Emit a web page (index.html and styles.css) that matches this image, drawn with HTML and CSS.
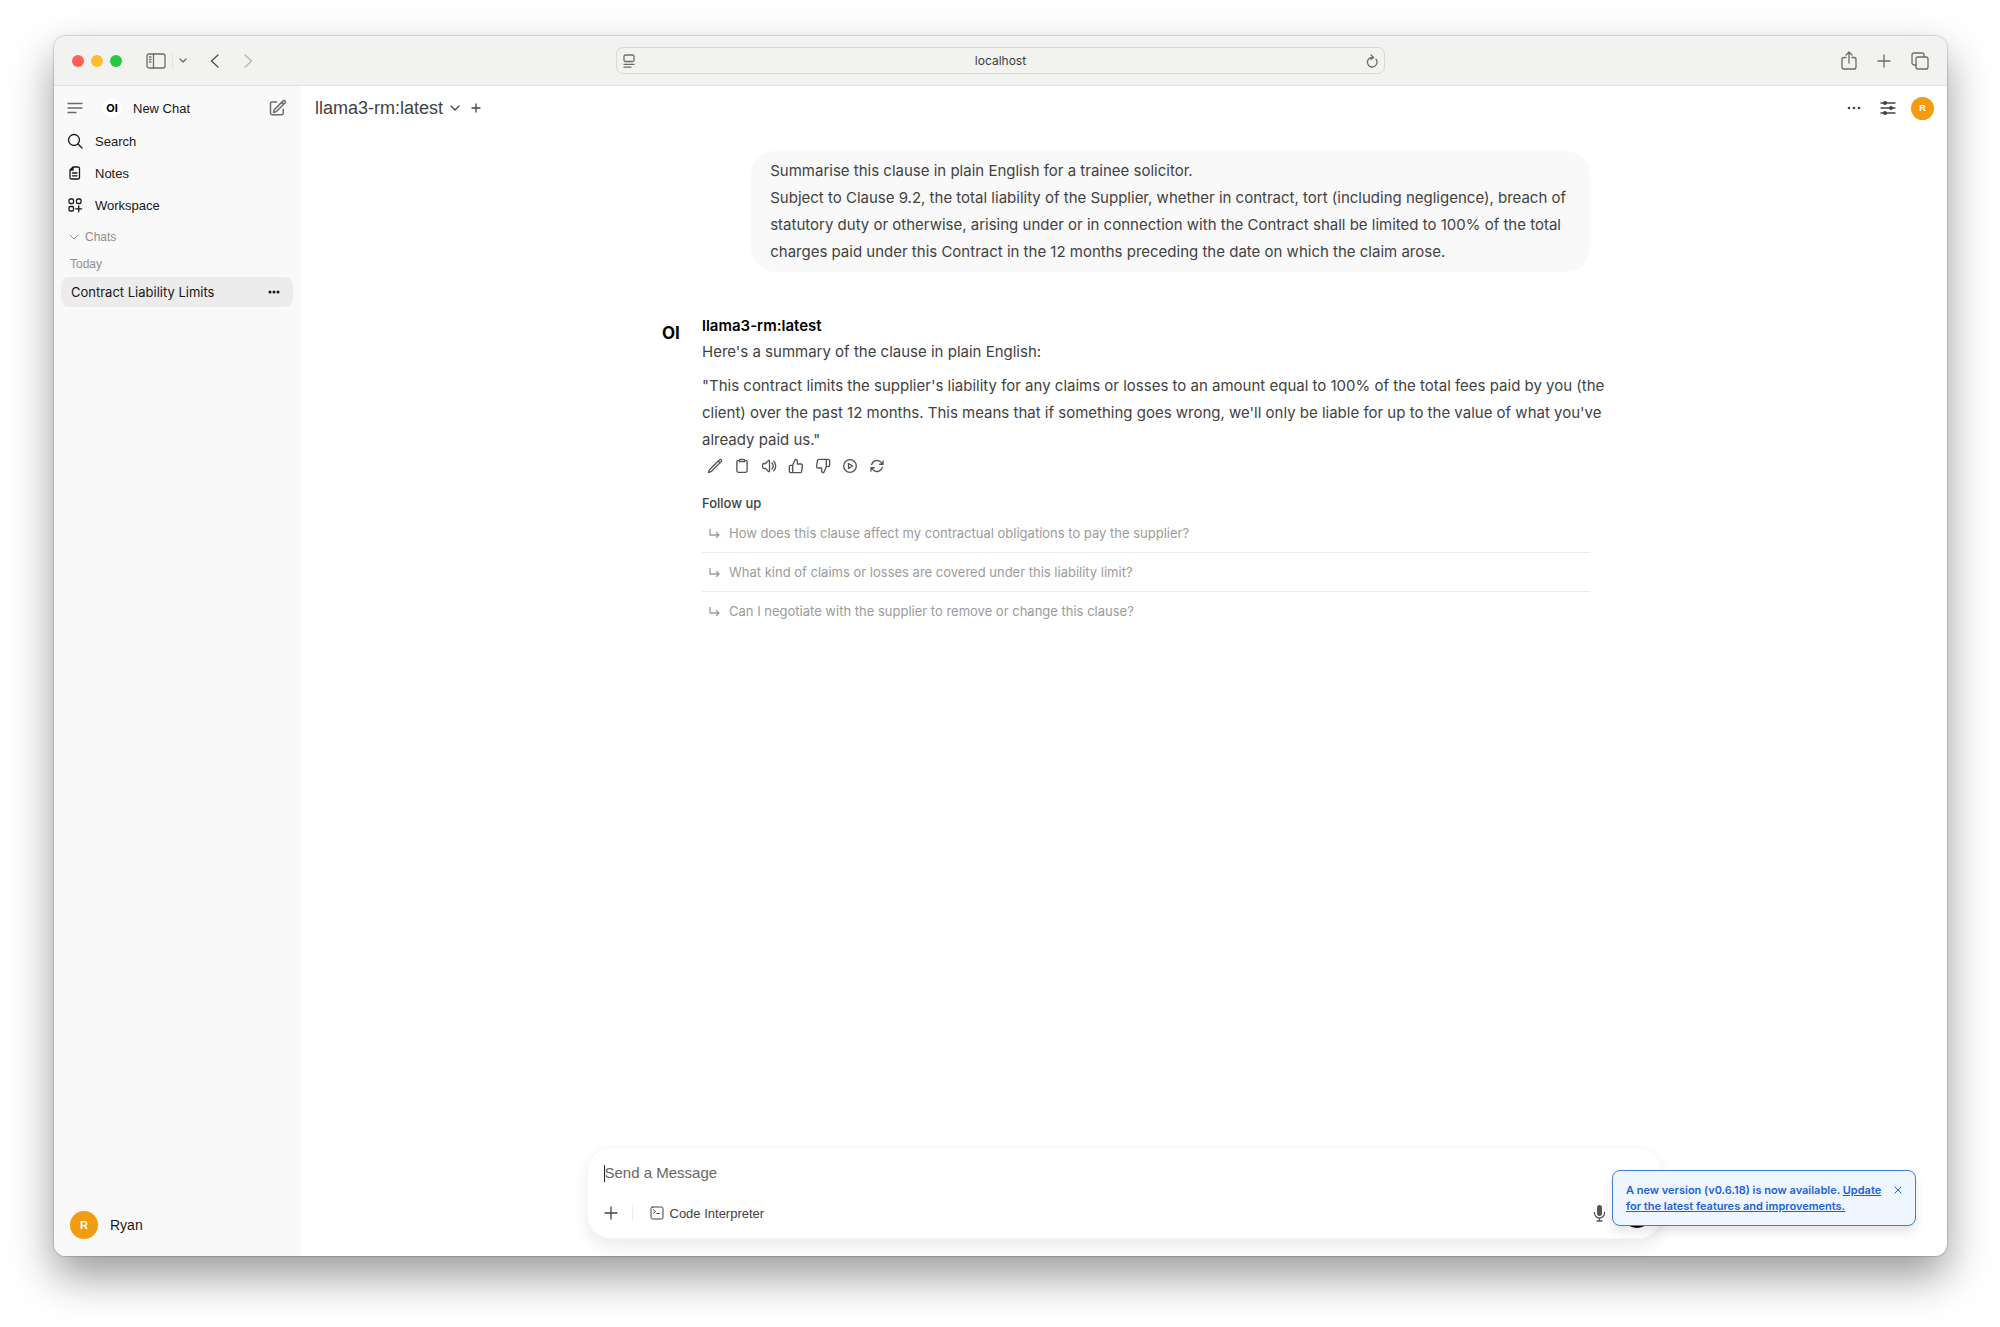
FILE: index.html
```html
<!DOCTYPE html>
<html lang="en">

<head>
    <meta charset="UTF-8">
    <meta name="viewport" content="width=device-width, initial-scale=1.0">
    <title>localhost</title>
    <link rel="stylesheet" href="styles.css">
</head>

<body>
    <div class="window">
        <!-- Browser toolbar -->
        <div class="toolbar">
            <div class="toolbar-left">
                <div class="lights">
                    <span class="light red"></span>
                    <span class="light yellow"></span>
                    <span class="light green"></span>
                </div>
                <button class="icon-button" aria-label="Sidebar">
                    <svg width="20" height="16" viewBox="0 0 20 16">
                        <rect x="1" y="1" width="18" height="14" rx="2" />
                        <path d="M7.500 1v14M3.500 4h1.500M3.500 6.500h1.500M3.500 9h1.500" />
                    </svg>
                </button>
                <span class="toolbar-line"></span>
                <button class="icon-button" aria-label="Tab groups">
                    <svg width="8" height="6" viewBox="0 0 8 6"><path d="M1 1l3 3 3-3" /></svg>
                </button>
                <button class="icon-button nav-back" aria-label="Back">
                    <svg width="9" height="16" viewBox="0 0 9 16"><path d="M8 2L1.500 8 8 14" /></svg>
                </button>
                <button class="icon-button nav-forward" aria-label="Forward">
                    <svg width="9" height="16" viewBox="0 0 9 16"><path d="M1 2l6.500 6L1 14" /></svg>
                </button>
            </div>
            <div class="address">
                <svg width="12" height="14" viewBox="0 0 12 14">
                    <rect x="1" y="1" width="10" height="6.500" rx="1.500" />
                    <path d="M1 10.300h10M1 13.200h7" />
                </svg>
                <input class="address-input" type="text" value="localhost" aria-label="Address">
                <button class="icon-button" aria-label="Reload">
                    <svg width="12" height="14" viewBox="0 0 12 14">
                        <path d="M10 5.200A4.800 4.800 0 1 1 6 3.400h1M5 1l2.500 2.400L5 5.600" />
                    </svg>
                </button>
            </div>
            <div class="toolbar-right">
                <button class="icon-button" aria-label="Share">
                    <svg width="16" height="19" viewBox="0 0 16 19">
                        <path d="M5 6.500H3a2 2 0 0 0-2 2V16a2 2 0 0 0 2 2h10a2 2 0 0 0 2-2V8.500a2 2 0 0 0-2-2h-2M8 12V1.500M5 4l3-3 3 3" />
                    </svg>
                </button>
                <button class="icon-button" aria-label="New tab">
                    <svg width="14" height="14" viewBox="0 0 14 14"><path d="M7 1v12M1 7h12" /></svg>
                </button>
                <button class="icon-button" aria-label="Show tabs">
                    <svg width="18" height="18" viewBox="0 0 18 18">
                        <rect x="5" y="5" width="12" height="12" rx="2" />
                        <path d="M5 13H3a2 2 0 0 1-2-2V3a2 2 0 0 1 2-2h8a2 2 0 0 1 2 2v2" />
                    </svg>
                </button>
            </div>
        </div>

        <div class="app">
            <!-- Sidebar -->
            <aside class="sidebar">
                <div class="side-top">
                    <button class="icon-button" aria-label="Toggle sidebar">
                        <svg width="16" height="12" viewBox="0 0 16 12"><path d="M1 1.500h14M1 6h14M1 10.500h8" /></svg>
                    </button>
                    <a class="new-chat" href="#">
                        <span class="brand">OI</span>
                        <span class="new-chat-label">New Chat</span>
                        <svg width="18" height="18" viewBox="0 0 24 24">
                            <path d="M16.860 4.490l1.690-1.690a1.880 1.880 0 1 1 2.650 2.650L10.580 16.070a4.500 4.500 0 0 1-1.900 1.130L6 18l.8-2.690a4.500 4.500 0 0 1 1.130-1.890zM16.860 4.490L19.500 7.130M19 14v4.750A2.250 2.250 0 0 1 16.750 21H4.250A2.250 2.250 0 0 1 2 18.750V6.250A2.250 2.250 0 0 1 4.250 4H10" />
                        </svg>
                    </a>
                </div>
                <nav class="side-nav">
                    <a class="side-link" href="#">
                        <svg width="16" height="16" viewBox="0 0 16 16"><circle cx="7" cy="7" r="5.500" /><path d="M11 11l4 4" /></svg>
                        Search
                    </a>
                    <a class="side-link" href="#">
                        <svg width="16" height="16" viewBox="0 0 16 16">
                            <path d="M6 2h5a1.500 1.500 0 0 1 1.500 1.500v9a1.500 1.500 0 0 1-1.500 1.500H4.500A1.500 1.500 0 0 1 3 12.500V5zM6 2v3H3M5.500 8h4.500M5.500 10.800h4.500" />
                        </svg>
                        Notes
                    </a>
                    <a class="side-link" href="#">
                        <svg width="16" height="16" viewBox="0 0 16 16">
                            <rect x="2" y="2" width="4.500" height="4.500" rx="1.300" />
                            <rect x="9.500" y="2" width="4.500" height="4.500" rx="1.300" />
                            <rect x="2" y="9.500" width="4.500" height="4.500" rx="1.300" />
                            <path d="M11.700 8.800v6M8.700 11.800h6" />
                        </svg>
                        Workspace
                    </a>
                </nav>
                <button class="chats-toggle">
                    <svg width="10" height="6" viewBox="0 0 10 6"><path d="M1 1l4 4 4-4" /></svg>
                    Chats
                </button>
                <div class="day">Today</div>
                <div class="chat-item">
                    <a class="chat-link" href="#">Contract Liability Limits</a>
                    <button class="icon-button" aria-label="Chat menu">
                        <svg class="dots" width="12" height="4" viewBox="0 0 12 4"><circle cx="2" cy="2" r="1.500" /><circle cx="6" cy="2" r="1.500" /><circle cx="10" cy="2" r="1.500" /></svg>
                    </button>
                </div>
                <button class="user">
                    <span class="avatar avatar-large">R</span>
                    Ryan
                </button>
            </aside>

            <!-- Chat -->
            <main class="main">
                <header class="header">
                    <button class="model">
                        llama3-rm:latest
                        <svg width="10" height="6" viewBox="0 0 10 6"><path d="M1 1l4 4 4-4" /></svg>
                    </button>
                    <button class="icon-button" aria-label="Add model">
                        <svg width="10" height="10" viewBox="0 0 10 10"><path d="M5 1v8M1 5h8" /></svg>
                    </button>
                    <div class="header-right">
                        <button class="icon-button" aria-label="More">
                            <svg class="dots" width="14" height="4" viewBox="0 0 14 4"><circle cx="2" cy="2" r="1.300" /><circle cx="7" cy="2" r="1.300" /><circle cx="12" cy="2" r="1.300" /></svg>
                        </button>
                        <button class="icon-button" aria-label="Controls">
                            <svg class="sliders" width="16" height="14" viewBox="0 0 16 14">
                                <path d="M1 2h14M1 7h14M1 12h14" />
                                <circle cx="5" cy="2" r="2" /><circle cx="11" cy="7" r="2" /><circle cx="5" cy="12" r="2" />
                            </svg>
                        </button>
                        <button class="avatar" aria-label="Account">R</button>
                    </div>
                </header>

                <div class="messages">
                    <div class="bubble">
                        Summarise this clause in plain English for a trainee solicitor.<br>
                        Subject to Clause 9.2, the total liability of the Supplier, whether in contract, tort (including negligence), breach of statutory duty or otherwise, arising under or in connection with the Contract shall be limited to 100% of the total charges paid under this Contract in the 12 months preceding the date on which the claim arose.
                    </div>

                    <div class="reply">
                        <div class="reply-logo">OI</div>
                        <div class="reply-body">
                            <h2 class="reply-name">llama3-rm:latest</h2>
                            <p>Here's a summary of the clause in plain English:</p>
                            <p class="quote">"This contract limits the supplier's liability for any claims or losses to an amount equal to 100% of the total fees paid by you (the<br>
                                client) over the past 12 months. This means that if something goes wrong, we'll only be liable for up to the value of what you've<br>
                                already paid us."</p>
                            <div class="actions">
                                <button class="icon-button" aria-label="Edit">
                                    <svg width="16" height="16" viewBox="0 0 24 24"><path d="M16.860 4.490l1.690-1.690a1.880 1.880 0 1 1 2.650 2.650L6.830 19.820a4.500 4.500 0 0 1-1.900 1.130L2.250 21.750l.8-2.690a4.500 4.500 0 0 1 1.130-1.890zM16.860 4.490l2.640 2.640" /></svg>
                                </button>
                                <button class="icon-button" aria-label="Copy">
                                    <svg width="16" height="16" viewBox="0 0 24 24"><path d="M8 3.500H6.500A2.200 2.200 0 0 0 4.300 5.700v13.600a2.200 2.200 0 0 0 2.200 2.200h11a2.200 2.200 0 0 0 2.200-2.200V5.700a2.200 2.200 0 0 0-2.200-2.200H16M8 5.500V3.800A1.600 1.600 0 0 1 9.600 2.200h4.800A1.600 1.600 0 0 1 16 3.800v1.700z" /></svg>
                                </button>
                                <button class="icon-button" aria-label="Read aloud">
                                    <svg width="16" height="16" viewBox="0 0 24 24"><path d="M19.110 4.890a10 10 0 0 1 0 14.220M16.460 7.540a6.300 6.300 0 0 1 0 8.920M6.750 8.250l4.720-4.720a.75.75 0 0 1 1.280.53v15.880a.75.75 0 0 1-1.280.53l-4.720-4.720H4.510c-.88 0-1.700-.51-1.940-1.350a9 9 0 0 1 0-4.800c.24-.85 1.060-1.350 1.940-1.350z" /></svg>
                                </button>
                                <button class="icon-button" aria-label="Good response">
                                    <svg width="16" height="16" viewBox="0 0 24 24"><path d="M7 22H4a2 2 0 0 1-2-2v-7a2 2 0 0 1 2-2h3M14 9V5a3 3 0 0 0-3-3l-4 9v11h11.280a2 2 0 0 0 2-1.700l1.380-9a2 2 0 0 0-2-2.300z" /></svg>
                                </button>
                                <button class="icon-button" aria-label="Bad response">
                                    <svg width="16" height="16" viewBox="0 0 24 24"><path d="M17 2h2.670A2.310 2.310 0 0 1 22 4v7a2.310 2.310 0 0 1-2.330 2H17M10 15v4a3 3 0 0 0 3 3l4-9V2H5.720a2 2 0 0 0-2 1.700l-1.380 9a2 2 0 0 0 2 2.300z" /></svg>
                                </button>
                                <button class="icon-button" aria-label="Continue">
                                    <svg width="16" height="16" viewBox="0 0 24 24"><circle cx="12" cy="12" r="9.500" /><path d="M9.800 8.300v7.400l6-3.700z" /></svg>
                                </button>
                                <button class="icon-button" aria-label="Regenerate">
                                    <svg width="16" height="16" viewBox="0 0 24 24"><path d="M16.020 9.350h4.990M2.990 19.640v-4.990h4.990M2.990 14.650l3.180 3.180a8.250 8.250 0 0 0 13.800-3.700M4.030 9.870a8.250 8.250 0 0 1 13.800-3.700l3.180 3.180V4.360" /></svg>
                                </button>
                            </div>

                            <h3 class="follow-title">Follow up</h3>
                            <ul class="follow-list">
                                <li>
                                    <button class="follow">
                                        <svg width="11" height="9" viewBox="0 0 11 9"><path d="M1 0v6h9M7.500 3.500L10 6 7.500 8.500" /></svg>
                                        How does this clause affect my contractual obligations to pay the supplier?
                                    </button>
                                </li>
                                <li>
                                    <button class="follow">
                                        <svg width="11" height="9" viewBox="0 0 11 9"><path d="M1 0v6h9M7.500 3.500L10 6 7.500 8.500" /></svg>
                                        What kind of claims or losses are covered under this liability limit?
                                    </button>
                                </li>
                                <li>
                                    <button class="follow">
                                        <svg width="11" height="9" viewBox="0 0 11 9"><path d="M1 0v6h9M7.500 3.500L10 6 7.500 8.500" /></svg>
                                        Can I negotiate with the supplier to remove or change this clause?
                                    </button>
                                </li>
                            </ul>
                        </div>
                    </div>
                </div>

                <!-- Message box -->
                <form class="composer">
                    <div class="composer-text">
                        <span class="caret"></span>
                        <textarea class="composer-input" rows="1" placeholder="Send a Message" aria-label="Send a Message"></textarea>
                    </div>
                    <div class="composer-tools">
                        <button class="icon-button" type="button" aria-label="Add">
                            <svg width="14" height="14" viewBox="0 0 14 14"><path d="M7 1v12M1 7h12" /></svg>
                        </button>
                        <span class="composer-line"></span>
                        <button class="interpreter" type="button">
                            <svg width="14" height="14" viewBox="0 0 14 14">
                                <rect x="1" y="1" width="12" height="12" rx="1.500" />
                                <path d="M3.500 3.800l2 1.700-2 1.700M6.800 7.500h2.500" />
                            </svg>
                            Code Interpreter
                        </button>
                        <button class="icon-button mic" type="button" aria-label="Voice input">
                            <svg width="13" height="18" viewBox="0 0 13 18">
                                <rect class="mic-body" x="4" y="1" width="5" height="11" rx="2.500" />
                                <path d="M1.500 8.500v.5a5 5 0 0 0 10 0v-.5M6.500 14v3M4 17h5" />
                            </svg>
                        </button>
                        <button class="voice" type="button" aria-label="Voice mode"></button>
                    </div>
                </form>
            </main>
        </div>

        <!-- Update notice -->
        <div class="toast">
            <p class="toast-text">A new version (v0.6.18) is now available. <a href="#">Update<br>for the latest features and improvements.</a></p>
            <button class="icon-button" aria-label="Close">
                <svg width="8" height="8" viewBox="0 0 8 8"><path d="M1 1l6 6M7 1L1 7" /></svg>
            </button>
        </div>
    </div>
</body>

</html>
```
FILE: styles.css
```css
* {
    box-sizing: border-box;
}

body {
    margin: 0;
    padding: 36px 53px 71px 54px;
    min-height: 100vh;
    display: flex;
    background-color: #fff;
    color: #424242;
    font-family: Inter, "Liberation Sans", sans-serif;
    font-size: 15px;
}

button,
input,
textarea {
    font: inherit;
    color: inherit;
    border: none;
    background: none;
    padding: 0;
    margin: 0;
}

button {
    cursor: pointer;
}

a {
    color: inherit;
    text-decoration: none;
}

svg {
    display: block;
    flex: none;
    fill: none;
    stroke: currentColor;
    stroke-width: 1.3;
    stroke-linecap: round;
    stroke-linejoin: round;
}

svg.dots,
.sliders circle,
.mic-body {
    fill: currentColor;
    stroke: none;
}

.icon-button {
    display: flex;
    align-items: center;
    justify-content: center;
}

/* window */
.window {
    position: relative;
    flex: 1;
    min-width: 0;
    display: flex;
    flex-direction: column;
    border-radius: 12px;
    background-color: #fff;
    box-shadow: 0 0 1px 1px rgba(0, 0, 0, 0.15), 0 20px 44px rgba(0, 0, 0, 0.4);
}

.toolbar {
    height: 50px;
    display: grid;
    grid-template-columns: 1fr minmax(300px, 769px) 1fr;
    align-items: center;
    padding: 0 18px;
    background-color: #f2f2f0;
    border-bottom: 1px solid #e0e0df;
    border-radius: 12px 12px 0 0;
    color: #6b6b69;
}

.toolbar-left,
.toolbar-right,
.lights {
    display: flex;
    align-items: center;
}

.toolbar-right {
    justify-content: flex-end;
    gap: 20px;
}

.lights {
    gap: 7px;
    margin-right: 24px;
}

.light {
    width: 12px;
    height: 12px;
    border-radius: 50%;
}

.red {
    background-color: #ff5f57;
}

.yellow {
    background-color: #febc2e;
}

.green {
    background-color: #28c840;
}

.toolbar-line {
    width: 1px;
    height: 17px;
    margin: 0 6px;
    background-color: #e3e3e1;
}

.nav-back {
    margin-left: 23px;
    color: #50504e;
}

.nav-forward {
    margin-left: 25px;
    color: #b5b5b3;
}

.address {
    display: flex;
    align-items: center;
    height: 27px;
    padding: 0 6px;
    border: 1px solid #d8d8d6;
    border-radius: 7px;
}

.address-input {
    flex: 1;
    min-width: 0;
    text-align: center;
    font-size: 12px;
    color: #3c3c3a;
}

.app {
    flex: 1;
    display: flex;
}

/* sidebar */
.sidebar {
    width: 247px;
    flex: none;
    display: flex;
    flex-direction: column;
    padding: 5px 8px 17px 7px;
    background-color: #f9f9f9;
    border-radius: 0 0 0 12px;
    color: #171717;
    font-family: "Liberation Sans", Arial, sans-serif;
    font-size: 13px;
}

.side-top {
    display: flex;
    align-items: center;
    height: 34px;
    padding: 0 6px;
    color: #6b6b6b;
}

.new-chat {
    flex: 1;
    display: flex;
    align-items: center;
    margin-left: 20px;
}

.brand {
    width: 18px;
    height: 18px;
    display: flex;
    align-items: center;
    justify-content: center;
    border-radius: 50%;
    background-color: #fff;
    color: #000;
    font-family: Inter, sans-serif;
    font-size: 11px;
    font-weight: 700;
}

.new-chat-label {
    flex: 1;
    margin-left: 12px;
    color: #171717;
}

.side-link {
    display: flex;
    align-items: center;
    gap: 12px;
    height: 32px;
    padding: 0 6px;
}

.chats-toggle {
    display: flex;
    align-items: center;
    gap: 6px;
    height: 32px;
    padding: 0 8px;
    color: #8f8f8f;
    font-size: 12px;
}

.chats-toggle svg {
    stroke-width: 1;
}

.day {
    height: 22px;
    line-height: 22px;
    padding: 0 9px;
    color: #8f8f8f;
    font-size: 12px;
}

.chat-item {
    display: flex;
    align-items: center;
    justify-content: space-between;
    height: 30px;
    margin-top: 2px;
    padding: 0 13px 0 10px;
    border-radius: 8px;
    background-color: #ececec;
}

.chat-link {
    font-family: Inter, sans-serif;
}

.user {
    display: flex;
    align-items: center;
    gap: 12px;
    margin-top: auto;
    padding: 0 9px;
    font-size: 14px;
}

.avatar {
    width: 23px;
    height: 23px;
    display: flex;
    align-items: center;
    justify-content: center;
    border-radius: 50%;
    background-color: #f39c12;
    color: #fff;
    font-family: "Liberation Sans", Arial, sans-serif;
    font-size: 9px;
    font-weight: 700;
}

.avatar-large {
    width: 28px;
    height: 28px;
    font-size: 11px;
}

/* main */
.main {
    flex: 1;
    min-width: 0;
    display: flex;
    flex-direction: column;
    padding-bottom: 17px;
}

.header {
    display: flex;
    align-items: center;
    gap: 11px;
    height: 44px;
    padding: 0 13px 0 14px;
}

.model {
    display: flex;
    align-items: center;
    gap: 7px;
    font-family: "Liberation Sans", Arial, sans-serif;
    font-size: 18px;
}

.header-right {
    display: flex;
    align-items: center;
    gap: 19px;
    margin-left: auto;
}

.header-right .avatar {
    margin-left: -4px;
}

.messages {
    flex: 1;
    width: 100%;
    max-width: 1074px;
    margin: 0 auto;
    padding: 21px 71px 0;
    display: flex;
    flex-direction: column;
    line-height: 27px;
}

.bubble {
    align-self: flex-end;
    max-width: 90%;
    padding: 6px 19px 7px;
    border-radius: 24px;
    background-color: #f9f9f9;
}

.reply {
    display: flex;
    margin-top: 42px;
}

.reply-logo {
    width: 44px;
    flex: none;
    padding: 6px 4px;
    color: #000;
    font-size: 17px;
    font-weight: 700;
}

.reply-body {
    flex: 1;
    min-width: 0;
}

.reply-name {
    margin: 0;
    color: #000;
    font-size: 15px;
    font-weight: 600;
    line-height: 24px;
}

.reply-body p {
    margin: 0 0 7px;
}

.reply-body .quote {
    margin-bottom: 5px;
    white-space: nowrap;
}

.actions {
    display: flex;
    gap: 11px;
    padding: 0 5px;
    color: #555;
}

.actions svg,
.new-chat svg {
    stroke-width: 2;
}

.follow-title {
    margin: 19px 0 0;
    font-size: 13px;
    font-weight: 500;
    line-height: 21px;
}

.follow-list {
    list-style: none;
    margin: 0;
    padding: 0;
}

.follow-list li + li {
    border-top: 1px solid #ebebeb;
}

.follow {
    display: flex;
    align-items: center;
    gap: 9px;
    width: 100%;
    height: 38px;
    padding: 0 7px;
    color: #9b9b9b;
    font-size: 13px;
    text-align: left;
}

/* message box */
.composer {
    width: calc(100% - 40px);
    max-width: 1075px;
    margin: 0 auto;
    padding: 14px 10px 10px 16px;
    border: 1px solid #f6f6f6;
    border-radius: 24px;
    box-shadow: 0 8px 16px rgba(0, 0, 0, 0.08);
    font-family: "Liberation Sans", Arial, sans-serif;
}

.composer-text {
    display: flex;
    align-items: center;
    height: 22px;
}

.caret {
    width: 1px;
    height: 17px;
    background-color: #222;
}

.composer-input {
    flex: 1;
    height: 22px;
    line-height: 22px;
    resize: none;
    outline: none;
}

.composer-input::placeholder {
    color: #666;
    opacity: 1;
}

.composer-tools {
    display: flex;
    align-items: center;
    height: 30px;
    margin-top: 14px;
}

.composer-line {
    width: 1px;
    height: 16px;
    margin: 0 17px 0 14px;
    background-color: #eee;
}

.interpreter {
    display: flex;
    align-items: center;
    gap: 6px;
    font-size: 13px;
}

.interpreter svg {
    stroke-width: 1;
}

.mic {
    margin: 0 16px 0 auto;
    color: #555;
}

.voice {
    width: 30px;
    height: 30px;
    margin-right: -1px;
    border-radius: 50%;
    background-color: #000;
}

/* update notice */
.toast {
    position: absolute;
    right: 31px;
    bottom: 30px;
    width: 304px;
    display: flex;
    align-items: flex-start;
    justify-content: space-between;
    padding: 11px 13px;
    border: 1px solid #3b7de0;
    border-radius: 8px;
    background-color: #eff6ff;
    box-shadow: 0 6px 10px rgba(0, 0, 0, 0.1);
    color: #1d63d8;
}

.toast-text {
    margin: 0;
    white-space: nowrap;
    font-size: 11px;
    font-weight: 600;
    line-height: 16px;
}

.toast-text a {
    text-decoration: underline;
}

.toast svg {
    margin-top: 4px;
    stroke-width: 1;
}
```
